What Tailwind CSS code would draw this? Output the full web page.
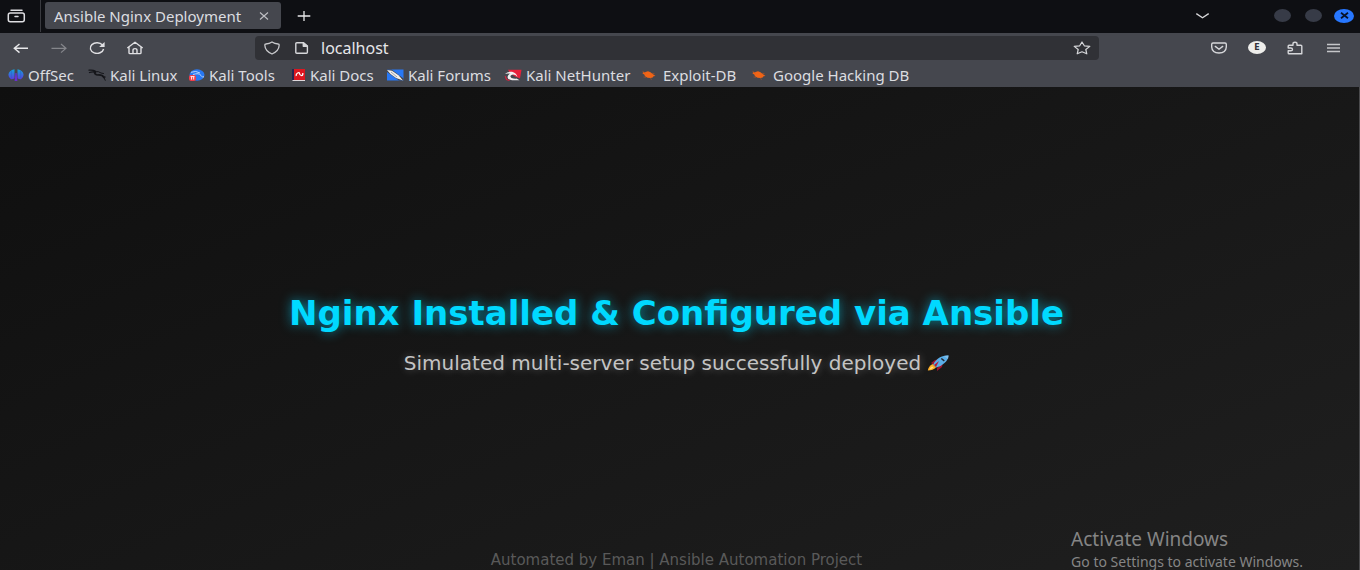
<!DOCTYPE html>
<html lang="en">
<head>
<meta charset="utf-8">
<meta name="viewport" content="width=device-width, initial-scale=1">
<title>Ansible Nginx Deployment</title>
<script src="https://cdn.jsdelivr.net/npm/@tailwindcss/browser@4"></script>
</head>
<body class="flex h-screen flex-col overflow-hidden bg-[#111] font-['Noto_Sans','Open_Sans',sans-serif] text-[15px] leading-5 text-[#dcdde0]">

<!-- Tab strip -->
<header class="flex h-[33px] shrink-0 items-center bg-[#0e0f13] pr-[6px] pb-[2px]">
  <button aria-label="Firefox View" class="flex h-8 w-10 items-center pl-[7px]">
    <svg class="h-[14px] w-[19px]" viewBox="0 0 19 14" fill="none" stroke="#dedee2" stroke-width="1.5" stroke-linecap="round"><path d="M4 1.3h11"/><rect x="1.3" y="4" width="16" height="8.7" rx="2"/><path d="M8 7.6h3"/></svg>
  </button>
  <span class="h-8 w-px bg-[#393a3f]"></span>
  <div class="ml-1 flex h-[27px] w-[236px] items-center rounded-[3px] bg-[#45474e] pl-[9px] pr-[11px]">
    <span class="flex-1 whitespace-nowrap">Ansible Nginx Deployment</span>
    <button aria-label="Close tab"><svg class="h-3 w-3" viewBox="0 0 12 12" stroke="#bfc0c4" stroke-width="1.1"><path d="M2 2.5l8 7M10 2.5l-8 7"/></svg></button>
  </div>
  <button aria-label="New tab" class="ml-4"><svg class="h-[14px] w-[14px]" viewBox="0 0 14 14" stroke="#e8e8ea" stroke-width="1.3"><path d="M7 2v10M.7 7h12.6"/></svg></button>
  <button aria-label="List all tabs" class="ml-auto mr-[64px]"><svg class="h-3 w-[15px]" viewBox="0 0 15 12" fill="none" stroke="#d8d8da" stroke-width="1.3"><path d="M1.3 3.6l6.2 4.2 6.2-4.2"/></svg></button>
  <div class="flex items-center gap-[14px]">
    <button aria-label="Minimize" class="h-[13px] w-[17px] rounded-[50%] bg-[#373b47]"></button>
    <button aria-label="Maximize" class="h-[13px] w-[17px] rounded-[50%] bg-[#373b47]"></button>
    <button aria-label="Close window" class="-ml-[2px] flex h-[14px] w-5 items-center justify-center rounded-[50%] bg-[#2777ff]"><svg class="h-[7px] w-[9px]" viewBox="0 0 9 7" stroke="#07142c" stroke-width="1.8"><path d="M1 .8l7 5.4M8 .8L1 6.2"/></svg></button>
  </div>
</header>

<!-- Navigation bar -->
<nav aria-label="Navigation" class="flex h-[31px] shrink-0 items-center bg-[#45474e] pl-3 pb-[2px] pr-[18px]">
  <div class="flex flex-1 items-center gap-5">
    <button aria-label="Back"><svg class="h-[14px] w-[18px]" viewBox="0 0 18 14" fill="none" stroke="#e8e8ea" stroke-width="1.4"><path d="M16 7.3H2.5M7.5 3L2.3 7.3l5.2 4.3"/></svg></button>
    <button aria-label="Forward" disabled><svg class="h-[14px] w-[18px]" viewBox="0 0 18 14" fill="none" stroke="#85868b" stroke-width="1.2"><path d="M1.500 7.3H16M11 3l5 4.3-5 4.3"/></svg></button>
    <button aria-label="Reload"><svg class="h-[14px] w-[18px]" viewBox="0 0 18 14" fill="none" stroke="#e0e0e3" stroke-width="1.4"><path d="M14.500 4A6.700 5.300 0 1 0 15.600 8"/><path d="M16.600 1v5h-5.500z" fill="#e0e0e3" stroke="none"/></svg></button>
    <button aria-label="Home"><svg class="h-[14px] w-[18px]" viewBox="0 0 18 14" fill="none" stroke="#e0e0e3" stroke-width="1.4" stroke-linejoin="round"><path d="M1.3 7L9 1.3 16.7 7M3 6v5.7q0 .9 1 .9h10q1 0 1-.9V6M7 12.500V9.300q0-1.700 2-1.700t2 1.700v3.200"/></svg></button>
  </div>
  <div class="flex h-6 w-[844px] shrink items-center rounded-[4px] bg-[#303136] pl-2 pr-2">
    <svg class="h-[14px] w-[18px]" viewBox="0 0 18 14" fill="none" stroke="#c8c9cc" stroke-width="1.3" stroke-linejoin="round"><path d="M9 1Q11.500 2.800 15.200 3q1 0 1 1-.2 6-7.200 9Q2 10 1.800 4q0-1 1-1Q6.500 2.800 9 1z"/></svg>
    <svg class="ml-[13px] h-[14px] w-[16px]" viewBox="0 0 16 14" fill="none" stroke="#d6d7da" stroke-width="1.4" stroke-linejoin="round"><path d="M2.8 1.8h6.700L13.400 5v6.300q0 1-1 1H2.800q-1 0-1-1V2.800q0-1 1-1z"/><path d="M9.300 1.800V5.200h4z" fill="#d6d7da"/></svg>
    <input aria-label="Address" value="localhost" class="ml-[11px] min-w-0 flex-1 bg-transparent text-[16px] text-[#e6e6e9] outline-none">
    <button aria-label="Bookmark this page"><svg class="h-[14px] w-[18px]" viewBox="0 0 18 14" fill="none" stroke="#d6d7da" stroke-width="1.2" stroke-linejoin="round"><path d="M9 1l2.300 3.800 5.500.6-4 3.100 1 4.300L9 10.800l-4.800 2 1-4.300-4-3.100 5.500-.6z"/></svg></button>
  </div>
  <div class="flex flex-1 items-center justify-end gap-5">
    <button aria-label="Save to Pocket"><svg class="h-[14px] w-[18px]" viewBox="0 0 18 14" fill="none" stroke="#d6d7da" stroke-width="1.4" stroke-linecap="round" stroke-linejoin="round"><path d="M3 2h12q1.300 0 1.300 1.200V6Q16 11.800 9 12 2 11.800 1.700 6V3.200Q1.700 2 3 2zM5.300 5.400L9 8.200l3.700-2.800"/></svg></button>
    <button aria-label="Account" class="flex h-[13px] w-[18px] items-center justify-center rounded-[50%] bg-[#eeeeeb] font-['DejaVu_Sans',sans-serif] text-[8px] leading-none font-bold text-[#33343a]">E</button>
    <button aria-label="Extensions"><svg class="h-[14px] w-[18px]" viewBox="0 0 18 14" fill="none" stroke="#d6d7da" stroke-width="1.4" stroke-linejoin="round"><path d="M3 4.200h4V2.800q0-1.600 2-1.600t2 1.600v1.400h3.800q1 0 1 .9v7.600H3q-.8 0-.8-.8V9.800h2.600q1.700 0 1.700-1.400T4.800 7H2.200V5q0-.8.8-.8z"/></svg></button>
    <button aria-label="Open menu"><svg class="h-[14px] w-[18px]" viewBox="0 0 18 14" stroke="#c5c6c9" stroke-width="1.3"><path d="M3 3.500h13M3 7h13M3 10.500h13"/></svg></button>
  </div>
</nav>

<!-- Bookmarks toolbar -->
<nav aria-label="Bookmarks" class="grid h-[23px] shrink-0 grid-cols-[80px_100px_102px_96px_118px_137px_110px_auto] items-center bg-[#45474e] pl-2 pb-[2px] whitespace-nowrap">
  <a href="#" class="flex items-center gap-1"><svg class="h-3 w-4" viewBox="0 0 16 12"><defs><linearGradient id="o" x2="0" y2="1"><stop stop-color="#12a5dc"/><stop offset="1" stop-color="#5b3be0"/></linearGradient></defs><path d="M6.500.3v9Q5 10.500 3 10.300.4 8.500.4 5.800.8 1.500 6.500.3zM9.500.3v9q1.500 1.200 3.500 1 2.600-1.800 2.600-4.500Q15.200 1.500 9.500.3z" fill="url(#o)"/><path d="M3.400 1.800v7.500M12.600 1.800v7.500" stroke="#2663c9" stroke-width=".6"/><path d="M7.400 4h1.200l.8 8H6.600z" fill="#6a2fd0"/></svg>OffSec</a>
  <a href="#" class="flex items-center gap-1"><svg class="h-3 w-[18px]" viewBox="0 0 18 12" fill="none" stroke="#15161a" stroke-linecap="round"><path d="M1 1.200q4-.6 6.500 1.200M1.500 3.500Q5 2.300 7.500 3.300" stroke-width="1.300"/><path d="M6.500 2.700Q6.500 5.800 10 6q4.500-.3 6 2.500" stroke-width="1.700"/><path d="M7.500 2.700q3-.8 5.500 1.300l2.500.5M14.500 7.500L17.300 8M16 8.500l1.200 2.800" stroke-width="1"/></svg>Kali Linux</a>
  <a href="#" class="flex items-center gap-1"><svg class="h-3 w-[17px]" viewBox="0 0 17 12"><ellipse cx="9" cy="6" rx="7.500" ry="5.700" fill="#2878f4"/><path d="M3 3.300q5-2 9 .7M5 5.500q6-2 8 1t3 1" fill="none" stroke="#b8d6ff"/><rect x="1" y="6" width="7" height="6" rx="2" fill="#f13d48"/><path d="M2.500 7.600h4M3.600 7.600v3M5.700 7.600v3" stroke="#fff" stroke-width=".9"/></svg>Kali Tools</a>
  <a href="#" class="flex items-center gap-1"><svg class="h-3 w-4" viewBox="0 0 16 12"><path d="M2 0H15v11H2z" fill="#dd1720"/><path d="M2 0h2v11H2z" fill="#282552"/><path d="M2.500 11h12.500v1H2.500z" fill="#ded8dc"/><path d="M12.800 4q.2 3-1.500 2.500T9.500 4.500 7.600 4 6.200 7" fill="none" stroke="#fff" stroke-width="1.300"/></svg>Kali Docs</a>
  <a href="#" class="flex items-center gap-1"><svg class="h-3 w-[18px]" viewBox="0 0 18 12"><path d="M1 .5h16.500v11H1z" fill="#2878f4"/><path d="M1 .5h4.500l12 9v2H13L1 3z" fill="#42454d"/><path d="M1 1l5 .8 6.500 4.500L17 11.500 10 9 4.500 5z" fill="#eee"/><path d="M5 3l6 5" stroke="#8b919c" stroke-width=".8"/></svg>Kali Forums</a>
  <a href="#" class="flex items-center gap-1"><svg class="h-3 w-[18px]" viewBox="0 0 18 12"><path d="M4 .8h13.500L16 9.500 11 7.500 6 4z" fill="#e8213b"/><path d="M1 5Q3.500 2 8 2.800q4.200 1 5.500 5.200-2.500-3-5.500-2.300-3 1.300-.5 3.300 2.500.8 5 .6l3 1.700H8Q3.500 10.800 3.500 8 4 5.300 6.500 4.800 3.500 4 1 5z" fill="#f2f0f1"/><path d="M1.200 7l1.300 3.500 3 1" stroke="#d02440" stroke-width="1.200" fill="none"/></svg>Kali NetHunter</a>
  <a href="#" class="flex items-center gap-[6px]"><svg class="h-3 w-4" viewBox="0 0 16 12"><path d="M2 3.300l2.500-.3L7 2.300l2.500 1 2.500 2 2.500 1.700-2 .2-.8 1.200-2.200.7-3-.3L4 7.300 3.300 5.500 1.500 4.500z" fill="#f06416"/><path d="M1.500 2.300l3 1.700M5 8.300L2.500 8M9 9.500l2 1M11 4.300l2.500.4" stroke="#a65127" stroke-width=".7"/></svg>Exploit-DB</a>
  <a href="#" class="flex items-center gap-[6px]"><svg class="h-3 w-4" viewBox="0 0 16 12"><path d="M2 3.300l2.500-.3L7 2.300l2.500 1 2.500 2 2.500 1.700-2 .2-.8 1.200-2.200.7-3-.3L4 7.300 3.300 5.500 1.500 4.500z" fill="#f06416"/><path d="M1.500 2.300l3 1.700M5 8.300L2.500 8M9 9.500l2 1M11 4.300l2.500.4" stroke="#a65127" stroke-width=".7"/></svg>Google Hacking DB</a>
</nav>

<!-- Page -->
<main class="relative flex min-h-0 flex-1 flex-col border-r border-r-[#4a4a4c] bg-linear-[157deg] from-[#0f0f0f] to-[#1f1f1f] text-center font-['DejaVu_Sans',sans-serif]">
  <div class="flex flex-1 flex-col items-center justify-center gap-[18px] pt-[34px] pr-[6px]">
    <h1 class="text-[34px] leading-9 font-bold text-[#00d9ff] [text-shadow:0_0_12px_#00d9ff99]">Nginx Installed &amp; Configured via Ansible</h1>
    <p class="flex items-center gap-[6px] text-[20px] leading-7 text-[#c4c4c4] [text-shadow:0_0_8px_#ffffff55]">Simulated multi-server setup successfully deployed
      <svg role="img" aria-label="Rocket" class="h-4 w-[22px]" viewBox="0 0 22 16"><path d="M4 8l4-3 5-1-6 6zM10 13l6-6-1 5-5 4z" fill="#a0142f"/><path d="M21.500.5Q15 0 10.500 4 7.500 6.500 6 10l3.500 2.500Q14 11.500 17.500 8 21 5 21.500.5z" fill="#5aaee8"/><path d="M17 1l4.500-.5L21 4z" fill="#82bfe9"/><path d="M14.300 3.500l3 2.300" stroke="#25242c" stroke-width="1.500"/><path d="M7 10l5-4-3 6z" fill="#b51c38"/><path d="M5.500 9Q1.500 11 .8 15.500 6 15.500 9 12.500z" fill="#ffb12b"/><path d="M5 11.500q-2 1-2.500 3 2.500-.5 4-2z" fill="#ffe087"/></svg>
    </p>
  </div>
  <footer class="pr-[6px] text-[15px] leading-5 text-[#595959]">Automated by Eman | Ansible Automation Project</footer>
  <aside class="absolute right-[56px] bottom-[-2px] text-left font-['Noto_Sans','Open_Sans',sans-serif] text-[#858585]">
    <div class="text-[19px] leading-[26px]">Activate Windows</div>
    <div class="text-[14px] leading-5">Go to Settings to activate Windows.</div>
  </aside>
</main>
</body>
</html>
